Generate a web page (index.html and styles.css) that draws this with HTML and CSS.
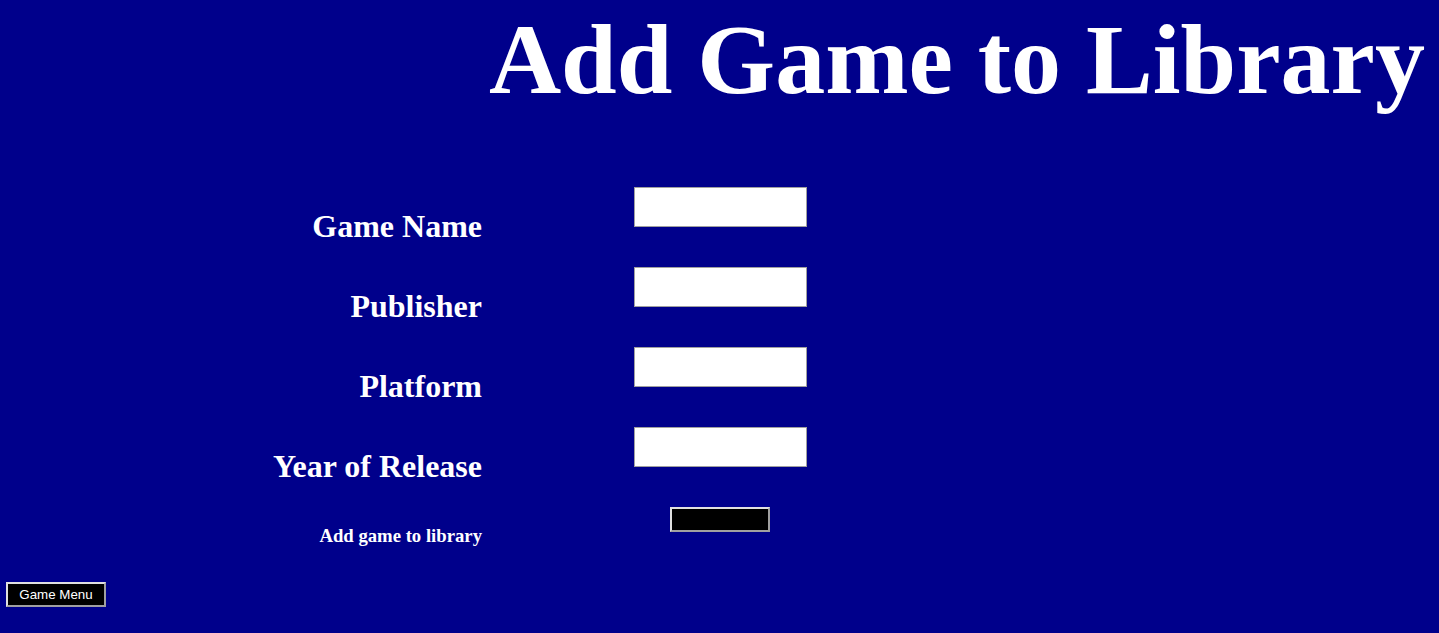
FILE: index.html
```html
<!DOCTYPE html>
<html lang="en">
<head>
<meta charset="utf-8">
<title>Add Game to Library</title>
<link rel="stylesheet" href="styles.css">
</head>
<body>
<h1 class="title">Add Game to Library</h1>
<form class="game-form">
  <label class="field-label" for="name">Game Name</label>
  <div class="field-cell"><input class="field-input" id="name" type="text"></div>
  <label class="field-label" for="publisher">Publisher</label>
  <div class="field-cell"><input class="field-input" id="publisher" type="text"></div>
  <label class="field-label" for="platform">Platform</label>
  <div class="field-cell"><input class="field-input" id="platform" type="text"></div>
  <label class="field-label" for="year">Year of Release</label>
  <div class="field-cell"><input class="field-input" id="year" type="text"></div>
  <span class="submit-label">Add game to library</span>
  <div class="field-cell"><button class="submit-btn" type="submit"></button></div>
</form>
<div class="menu-row"><button class="menu-btn" type="button">Game Menu</button></div>
</body>
</html>
```
FILE: styles.css
```css
html, body {
  margin: 0;
  padding: 0;
}
body {
  background: #00008b;
  color: #ffffff;
  font-family: "Liberation Serif", "Times New Roman", serif;
  height: 633px;
  overflow: hidden;
}
.title {
  margin: 0;
  padding: 10px 14px 0 0;
  text-align: right;
  font-size: 100px;
  line-height: 100px;
  font-weight: bold;
}
.game-form {
  margin-top: 57px;
  display: grid;
  grid-template-columns: 482px 476px;
  grid-auto-rows: 80px;
}
.field-label {
  justify-self: end;
  text-align: right;
  font-size: 32px;
  line-height: 32px;
  font-weight: bold;
  padding-top: 43px;
  white-space: nowrap;
}
.field-cell {
  display: flex;
  justify-content: center;
  align-items: flex-start;
  padding-top: 20px;
}
.field-input {
  box-sizing: border-box;
  width: 173px;
  height: 40px;
  margin: 0;
  border: 1px solid #a0a0a0;
  background: #ffffff;
  padding: 0 4px;
}
.submit-label {
  justify-self: end;
  font-size: 18.72px;
  line-height: 18.72px;
  font-weight: bold;
  padding-top: 40px;
  white-space: nowrap;
}
.submit-btn {
  box-sizing: border-box;
  width: 100px;
  height: 25px;
  margin: 0;
  padding: 0;
  background: #000000;
  border: 2px solid;
  border-color: #e0e0e0 #a0a0a0 #a0a0a0 #e0e0e0;
}
.menu-row {
  padding: 15px 0 0 6px;
}
.menu-btn {
  box-sizing: border-box;
  width: 100px;
  height: 25px;
  margin: 0;
  padding: 0;
  background: #000000;
  color: #ffffff;
  font-family: "Liberation Sans", Arial, sans-serif;
  font-size: 13.333px;
  border: 2px solid;
  border-color: #e0e0e0 #a0a0a0 #a0a0a0 #e0e0e0;
}
```
